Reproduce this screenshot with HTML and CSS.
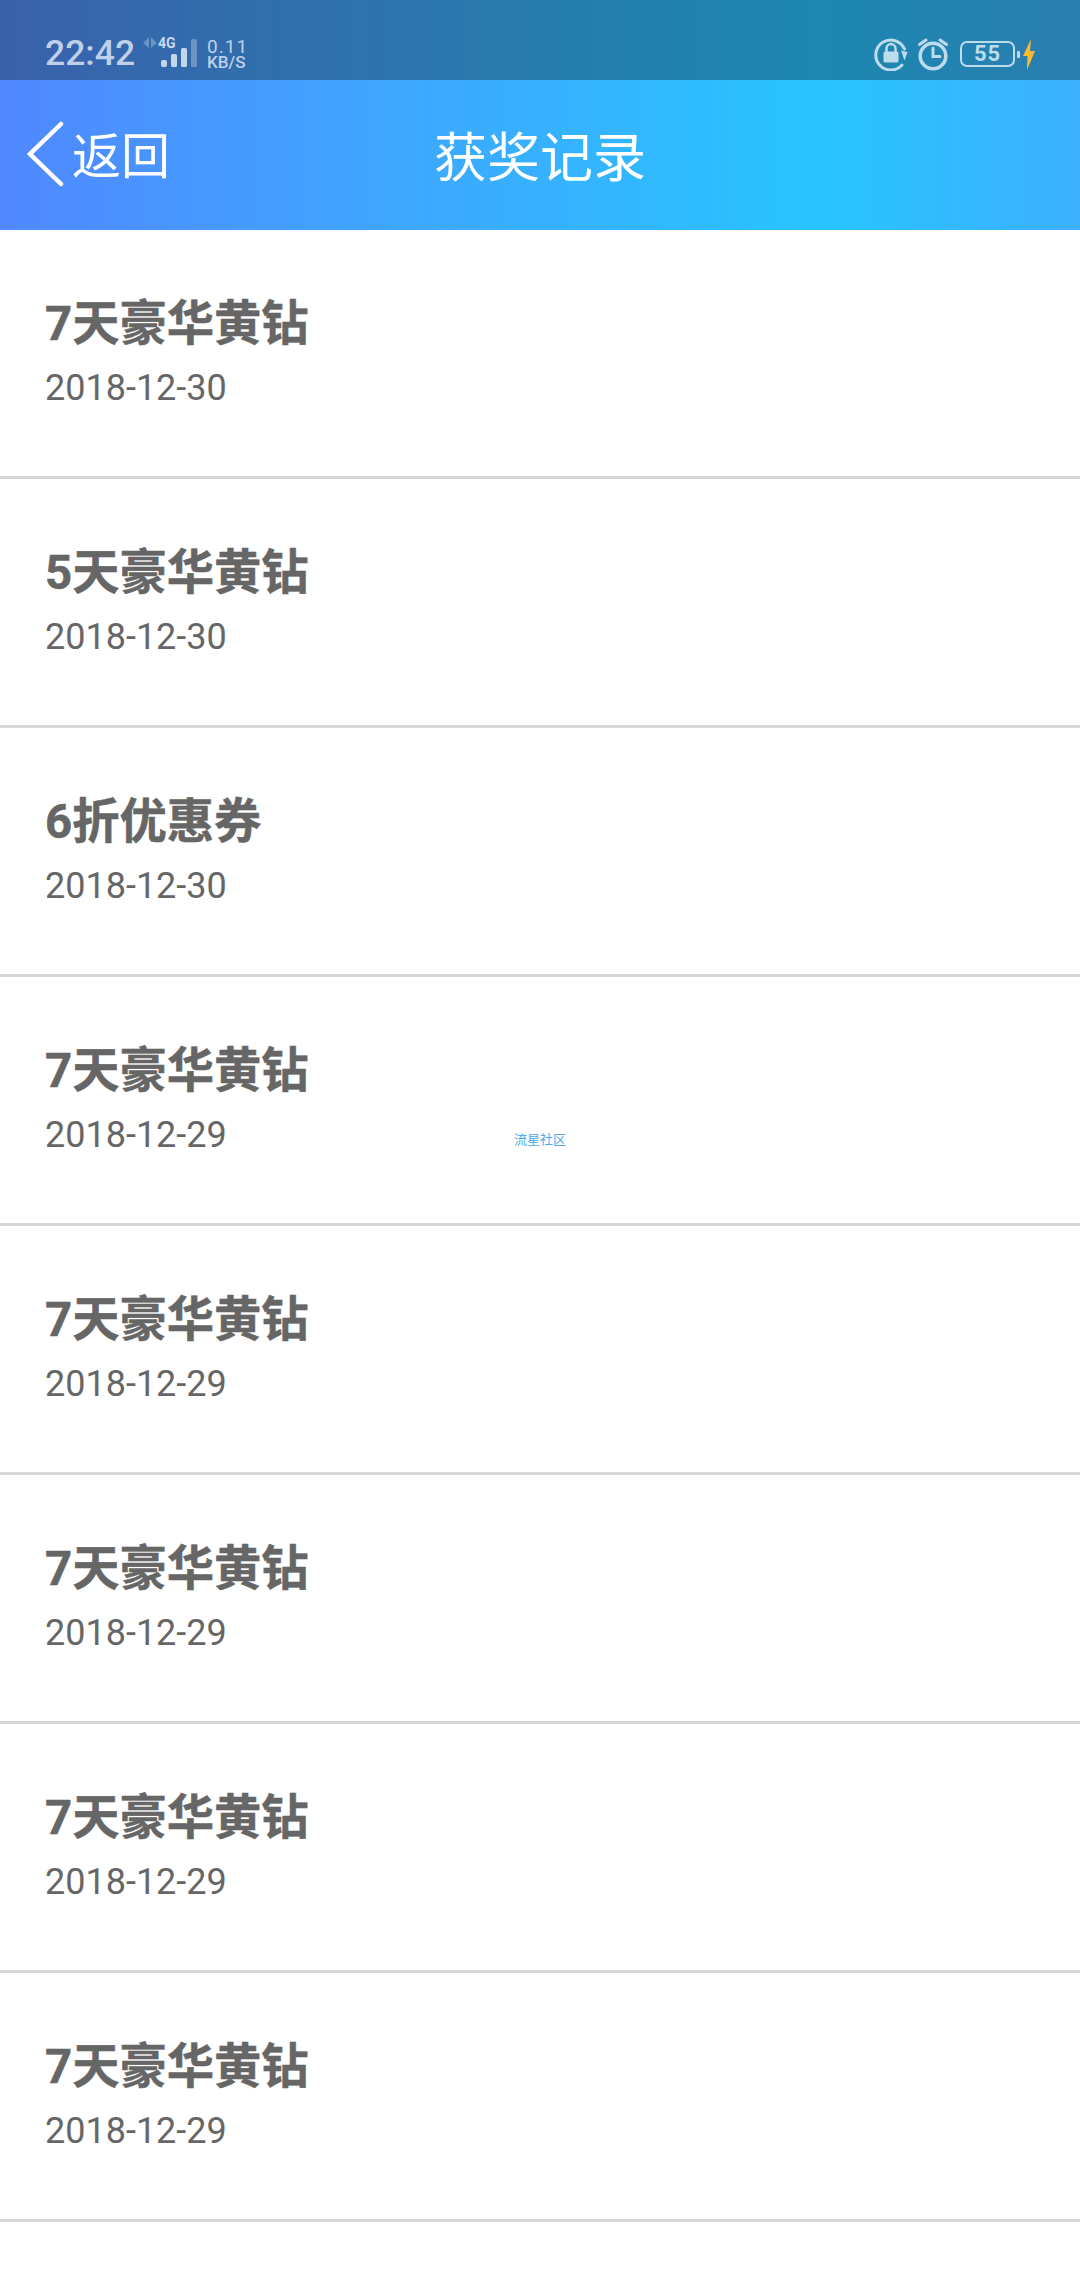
FILE: index.html
```html
<!DOCTYPE html>
<html lang="zh-CN">
<head>
<meta charset="utf-8">
<title>获奖记录</title>
<link rel="stylesheet" href="styles.css">
</head>
<body>
<div class="top">
  <div class="status">
    <span class="time">22:42</span>
    <div class="signal">
      <span class="net">4G</span>
      <svg class="signal-art" width="56" height="34" viewBox="0 0 56 34">
        <path class="faint" d="M6 1v11L0 7zM8 1v11l6-5z"/>
        <rect class="bar" x="18" y="24" width="6" height="7" rx="2"/>
        <rect class="bar" x="28" y="18" width="6" height="13" rx="1.5"/>
        <rect class="bar" x="38" y="12" width="6" height="19" rx="1.5"/>
        <rect class="faint" x="48" y="3" width="6" height="28" rx="1.5"/>
      </svg>
    </div>
    <div class="speed"><span class="speed-num">0.11</span><span class="speed-unit">KB/S</span></div>
    <div class="status-right">
      <svg class="ico" width="34" height="34" viewBox="0 0 34 34">
        <path class="line" d="M30.500 12A15 15 0 1 0 28 28"/>
        <path class="solid" d="M27 13.500l6.500 1.500-3 8.500z"/>
        <path class="line thin" d="M12.500 15v-3.500a4.500 4.500 0 0 1 9 0V15"/>
        <rect class="solid" x="9.500" y="14.500" width="15" height="11" rx="1.500"/>
      </svg>
      <svg class="ico alarm" width="32" height="34" viewBox="0 0 32 34">
        <circle class="line thick" cx="16" cy="19" r="12.800"/>
        <path class="line" d="M16 11v8.500h7"/>
        <path class="line" d="M2.500 7.500L9 3M29.500 7.500L23 3"/>
      </svg>
      <div class="battery"><span class="battery-num">55</span></div>
      <span class="battery-cap"></span>
      <svg class="bolt" width="12" height="31" viewBox="0 0 12 31"><path d="M8 0L0 17h4.500L4 31l8-19H7z"/></svg>
    </div>
  </div>
  <header class="nav">
    <div class="back">
      <svg class="chevron" width="38" height="66" viewBox="0 0 38 66"><path d="M35 3L4 33l31 30"/></svg>
      <span class="back-label">返回</span>
    </div>
    <h1 class="nav-title">获奖记录</h1>
  </header>
</div>
<main class="list">
  <div class="row"><div class="name">7天豪华黄钻</div><div class="date">2018-12-30</div></div>
  <div class="row"><div class="name">5天豪华黄钻</div><div class="date">2018-12-30</div></div>
  <div class="row"><div class="name">6折优惠券</div><div class="date">2018-12-30</div></div>
  <div class="row"><div class="name">7天豪华黄钻</div><div class="date">2018-12-29</div></div>
  <div class="row"><div class="name">7天豪华黄钻</div><div class="date">2018-12-29</div></div>
  <div class="row"><div class="name">7天豪华黄钻</div><div class="date">2018-12-29</div></div>
  <div class="row"><div class="name">7天豪华黄钻</div><div class="date">2018-12-29</div></div>
  <div class="row"><div class="name">7天豪华黄钻</div><div class="date">2018-12-29</div></div>
</main>
<div class="watermark">流星社区</div>
</body>
</html>
```
FILE: styles.css
```css
* { box-sizing: border-box; }
html, body { margin: 0; padding: 0; }
body {
  width: 1080px;
  height: 2280px;
  overflow: hidden;
  background: #fff;
  position: relative;
  font-family: Roboto, "Noto Sans CJK SC", sans-serif;
}
.top {
  background: linear-gradient(90deg, #5088ff 0%, #40a4ff 33%, #28c4ff 76%, #3cb0ff 100%);
}
.status {
  height: 80px;
  display: flex;
  align-items: flex-end;
  padding: 0 45px 10px 45px;
  background: linear-gradient(90deg, rgba(30,50,70,.45) 0%, rgba(13,62,80,.45) 76%, rgba(20,64,80,.45) 100%);
  color: #bfd0e8;
}
.time { font-size: 35.500px; font-weight: 500; line-height: 33px; }
.signal { position: relative; width: 56px; height: 34px; margin-left: 8px; flex: none; }
.signal-art { display: block; }
.net {
  position: absolute;
  left: 15px;
  top: 0;
  font-size: 14px;
  line-height: 14px;
  font-weight: 700;
  color: #c8d8ee;
}
.faint { fill: rgba(210,225,245,.35); }
.bar { fill: #c4d6ec; }
.speed { display: flex; flex-direction: column; margin-left: 8px; }
.speed-num { font-size: 19px; line-height: 17px; letter-spacing: 1px; }
.speed-unit { font-size: 17px; line-height: 15px; font-weight: 500; }
.status-right { margin-left: auto; display: flex; align-items: center; margin-bottom: -1px; color: #bcdcec; }
.ico { flex: none; }
.alarm { margin-left: 9px; }
.line { fill: none; stroke: #bcdcec; stroke-width: 3px; stroke-linecap: round; }
.line.thin { stroke-width: 2.500px; }
.line.thick { stroke-width: 3.500px; }
.solid { fill: #bcdcec; }
.battery {
  width: 55px;
  height: 26px;
  margin-left: 11px;
  border: 2px solid #bcdcec;
  border-radius: 7px;
  display: flex;
  align-items: center;
  justify-content: center;
}
.battery-num { font-size: 22px; font-weight: 700; line-height: 22px; letter-spacing: 1px; }
.battery-cap { width: 3px; height: 7px; margin-left: 2px; background: #bcdcec; border-radius: 1px; }
.bolt { margin-left: 3px; fill: #fdb92e; flex: none; }
.nav {
  height: 150px;
  display: grid;
  grid-template-columns: 1fr auto 1fr;
  align-items: center;
  color: #fff;
}
.back {
  grid-column: 1;
  display: flex;
  align-items: center;
  padding-left: 26px;
  font-size: 49px;
  font-family: "Noto Sans CJK SC", sans-serif;
  line-height: 66px;
}
.back-label { margin-bottom: 5px; }
.chevron { flex: none; margin-top: -2px; margin-right: 8px; fill: none; stroke: #fff; stroke-width: 4.500px; stroke-linecap: round; }
.nav-title {
  grid-column: 2;
  margin: 0 0 2px;
  font-size: 53px;
  font-weight: 400;
  font-family: "Noto Sans CJK SC", sans-serif;
  line-height: 66px;
}
.row {
  height: 249px;
  padding: 63px 0 0 45px;
  border-bottom: 3px solid #d6d6d6;
  color: #666;
}
.name { font-size: 47.300px; font-weight: 700; line-height: 62px; -webkit-text-stroke: .5px #666; }
.date { font-size: 36px; line-height: 42px; margin-top: 12px; }
.watermark {
  position: absolute;
  left: 490px;
  top: 1130px;
  width: 100px;
  text-align: center;
  font-size: 13px;
  line-height: 18px;
  color: #4aa8f0;
  font-family: "Noto Sans CJK SC", sans-serif;
}
```
